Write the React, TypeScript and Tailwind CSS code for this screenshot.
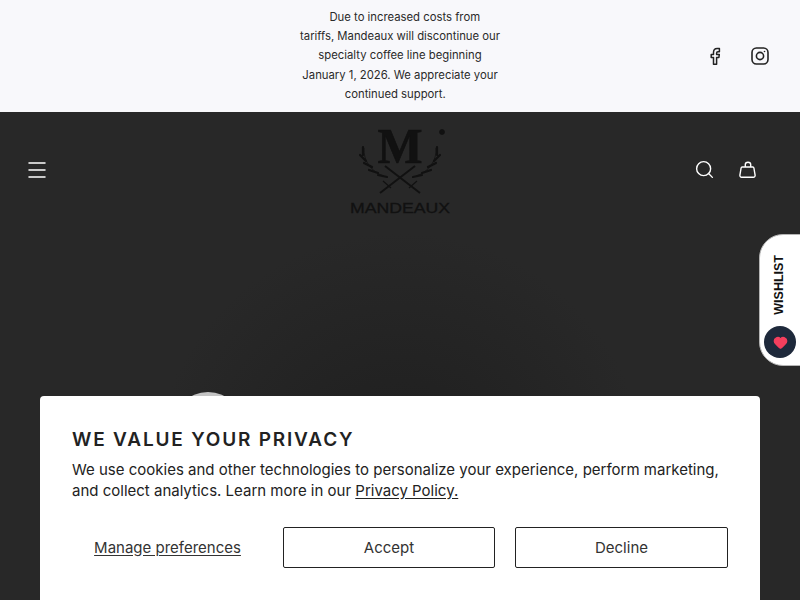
import { Heart, Menu, Search } from 'lucide-react';

function FacebookIcon() {
    return (
        <svg className="w-[20px] h-[20px]" viewBox="0 0 20 20" fill="#f8f8fb" stroke="#222" strokeWidth={1.5} strokeLinejoin="round">
            <path d="M11.6 18.2V11.4h2.3l.4-2.8h-2.7V7.2c0-.9.4-1.4 1.4-1.4h1.4V2.6c-.6-.1-1.3-.2-2.2-.2-2.4 0-3.7 1.5-3.7 4v2.2H6.2v2.8h2.3v6.8z" />
        </svg>
    );
}

function InstagramIcon() {
    return (
        <svg className="w-[18px] h-[18px]" viewBox="0 0 18 18" fill="none" stroke="#222" strokeWidth={1.6}>
            <rect x="1" y="1" width="16" height="16" rx="4.4" />
            <circle cx="9" cy="9" r="3.6" />
            <circle cx="13.5" cy="4.5" r="0.8" fill="#222" stroke="none" />
        </svg>
    );
}

function BagIcon() {
    return (
        <svg className="w-[18px] h-[18px]" viewBox="0 0 18 18" fill="none" stroke="white" strokeWidth={1.4} strokeLinejoin="round">
            <path d="M4.2 6h9.600c.6 0 1 .4 1.100 1l1.200 7.200c.2 1.100-.6 2.100-1.700 2.100H2.600c-1.100 0-1.900-1-1.700-2.100L2.100 7c.1-.6.5-1 1.100-1z" />
            <path d="M6.300 6V3.400C6.300 2.200 7.300 1.200 9 1.200s2.700 1 2.700 2.200V6" />
        </svg>
    );
}

// viewBox uses page coordinates so the marks line up with the screenshot
function Logo() {
    const leaves = 'M363 147v8M360 155l6 6M364 163l8 4M369 170l9 3M378 175l9 2';
    return (
        <svg className="w-[110px] h-[92px] overflow-visible" viewBox="345 125 110 92" fill="#111" stroke="#111">
            <text x="400" y="163" textAnchor="middle" strokeWidth="0.700" fontSize="50" fontWeight="700" fontFamily="Liberation Serif, serif" textLength="45" lengthAdjust="spacingAndGlyphs">M</text>
            <circle cx="442" cy="132" r="2.500" strokeWidth="0.8" />
            <path d="M385 166 420 193M415 166 380 193" strokeWidth="2" fill="none" />
            <path d="M383 181l8 7M417 181l-8 7" strokeWidth="1.200" fill="none" />
            <path d={leaves} strokeWidth="2.200" strokeLinecap="round" fill="none" />
            <path d={leaves} strokeWidth="2.200" strokeLinecap="round" fill="none" transform="translate(800 0) scale(-1 1)" />
            <path d="M364 148C363 160 371 172 384 176" strokeWidth="0.800" fill="none" />
            <path d="M436 148C437 160 429 172 416 176" strokeWidth="0.800" fill="none" />
            <text x="400" y="213" textAnchor="middle" stroke="#111" strokeWidth="0.300" fontSize="14" fontFamily="Liberation Sans, sans-serif" textLength="100" lengthAdjust="spacingAndGlyphs">MANDEAUX</text>
        </svg>
    );
}

export default function App() {
    return (
        <div className="relative h-[600px] w-[800px] overflow-hidden bg-[#282828] font-['Inter',sans-serif]">
            {/* Announcement bar */}
            <div className="relative flex h-[112px] items-center justify-center bg-[#f8f8fb]">
                <p className="whitespace-nowrap text-center text-[11.3px] leading-[19.2px] text-[#2a2a2a]">
                    &nbsp;&nbsp;&nbsp;Due to increased costs from<br />
                    tariffs, Mandeaux will discontinue our<br />
                    specialty coffee line beginning<br />
                    January 1, 2026. We appreciate your<br />
                    continued support.&nbsp;&nbsp;&nbsp;
                </p>
                <div className="absolute right-[31px] top-[46px] flex items-center gap-[26px]">
                    <FacebookIcon />
                    <InstagramIcon />
                </div>
            </div>

            {/* Header */}
            <header className="relative z-10 grid h-[112px] grid-cols-[1fr_auto_1fr] items-start px-[25px]">
                <Menu className="mt-[46px] h-[24px] w-[24px] text-white" strokeWidth={1.5} />
                <div className="mt-[13px]">
                    <Logo />
                </div>
                <div className="mr-[18px] mt-[47px] flex items-center justify-end gap-[24px]">
                    <Search className="h-[21px] w-[21px] text-white" strokeWidth={1.6} />
                    <BagIcon />
                </div>
            </header>

            {/* Hero glow */}
            <div className="absolute left-[150px] top-[230px] h-[500px] w-[500px] rounded-full bg-[radial-gradient(circle,#1e1e1e_0%,#282828_70%)]" />
            <div className="absolute left-[172px] top-[392px] h-[72px] w-[72px] rounded-full bg-[#c4c4c4]" />

            {/* Wishlist tab */}
            <div className="absolute right-[-2px] top-[234px] flex h-[132px] w-[43px] flex-col items-center rounded-l-[24px] border border-[#b5b5b5] bg-white pr-[3px]">
                <span className="mt-[20px] font-['Liberation_Sans',sans-serif] text-[12.5px] font-bold leading-[14px] text-[#111] [writing-mode:vertical-rl] rotate-180">
                    WISHLIST
                </span>
                <div className="absolute bottom-[7px] left-[3px] flex h-[32px] w-[32px] translate-x-[1px] items-center justify-center rounded-full bg-[#1e293b]">
                    <Heart className="h-[15px] w-[15px] text-[#f43f5e]" fill="currentColor" strokeWidth={2} />
                </div>
            </div>

            {/* Cookie banner */}
            <div className="absolute left-[40px] top-[396px] h-[204px] w-[720px] rounded-t-[4px] bg-white px-[32px] pt-[32px] text-[#222]">
                <h2 className="text-[19px] font-semibold leading-[24px] tracking-[0.095em]">WE VALUE YOUR PRIVACY</h2>
                <p className="mt-[7px] text-[15px] leading-[21px]">
                    We use cookies and other technologies to personalize your experience, perform marketing, and collect analytics. Learn more in our <a className="underline underline-offset-2">Privacy Policy.</a>
                </p>
                <div className="mt-[26px] flex items-center gap-[20px] text-[15px] text-[#333]">
                    <a className="flex-1 pt-[1px] text-center underline underline-offset-2">Manage preferences</a>
                    <button className="h-[41px] w-[212px] rounded-[2px] border border-[#222] pt-[1px]">Accept</button>
                    <button className="h-[41px] w-[213px] rounded-[2px] border border-[#222] pt-[1px]">Decline</button>
                </div>
            </div>
        </div>
    );
}
